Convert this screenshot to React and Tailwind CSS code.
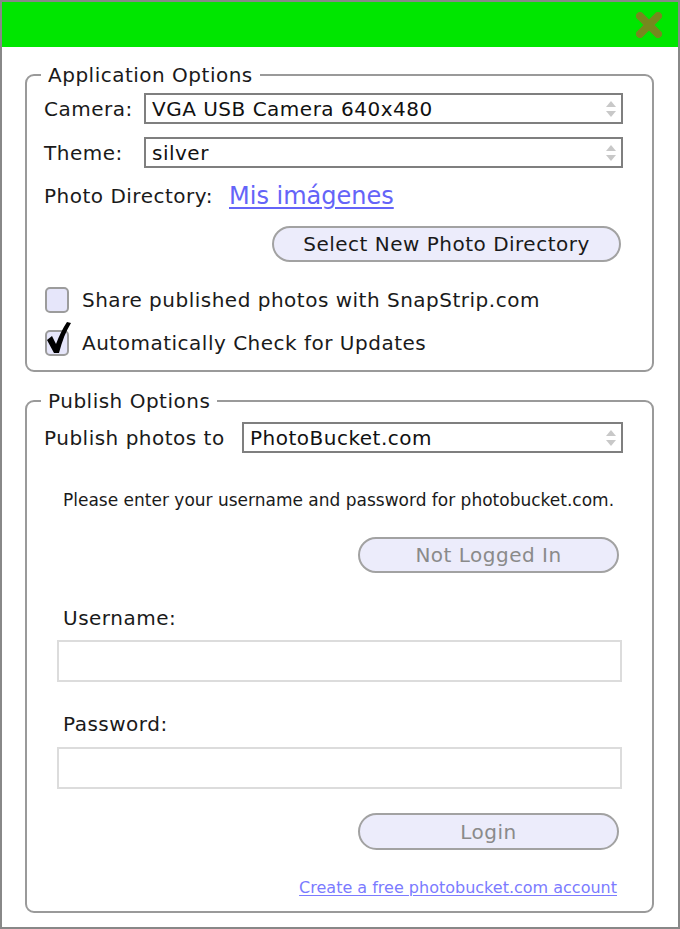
import React from 'react';

const font = "font-['DejaVu_Sans','Liberation_Sans',sans-serif]";

const Spinner = () => (
  <svg width="14" height="20" viewBox="0 0 14 20" className="shrink-0">
    <path d="M7 2 L12 8 L2 8 Z" fill="#c8c8c8" />
    <path d="M2 12 L12 12 L7 18 Z" fill="#c8c8c8" />
  </svg>
);

const SelectBox = ({ value }) => (
  <div className="flex-1 h-[31px] border-2 border-[#7f7f7f] flex items-center justify-between pl-[6px] pr-[3px] text-[20px] tracking-[0.5px] text-[#111]">
    <span>{value}</span>
    <Spinner />
  </div>
);

const PillButton = ({ children, width, height, muted }) => (
  <button
    className={`rounded-full border-2 border-[#a2a2a2] bg-[#ececfb] text-[20px] tracking-[0.5px] flex items-center justify-center ${
      muted ? 'text-[#8a8a8a]' : 'text-[#1a1a1a]'
    } ${width} ${height}`}
  >
    {children}
  </button>
);

const Checkbox = ({ checked }) => (
  <div className="relative w-[24px] h-[26px] shrink-0">
    <div className="w-[24px] h-[26px] rounded-[5px] border-2 border-[#9c9c9c] bg-[#e6e6fa]" />
    {checked && (
      <svg width="26" height="34" viewBox="0 0 26 34" className="absolute left-[1px] top-[-9px]">
        <path d="M1 19 L6 15 L10 23 C13 15 17 7 21 1 L25 2 C20 10 16 20 13 32 L8 32 Z" fill="#000" />
      </svg>
    )}
  </div>
);

const Legend = ({ children }) => (
  <legend className="ml-[14px] px-[7px] text-[20px] tracking-[0.5px] leading-[26px] text-[#1a1a1a]">{children}</legend>
);

export default function App() {
  return (
    <div className={`w-[680px] h-[929px] border-2 border-[#888] bg-white flex flex-col ${font}`}>
      <div className="h-[45px] bg-[#00e600] flex items-center justify-end pr-[14px] shrink-0">
        <svg width="30" height="30" viewBox="0 0 30 30">
          <g stroke="#7d8421" strokeWidth="8" strokeLinecap="round" opacity="0.95">
            <path d="M6 6 L24 24" />
            <path d="M24 6 L6 24" />
          </g>
        </svg>
      </div>

      <div className="ml-[23px] mr-[24px] flex flex-col">
        <fieldset className="mt-[15px] border-2 border-[#9a9a9a] rounded-[9px]">
          <Legend>Application Options</Legend>
          <div className="pl-[17px] pr-[29px] pt-[5px] pb-[13px] flex flex-col text-[20px] tracking-[0.5px] text-[#1a1a1a]">
            <div className="flex items-center h-[31px]">
              <span className="w-[100px] shrink-0">Camera:</span>
              <SelectBox value="VGA USB Camera 640x480" />
            </div>
            <div className="flex items-center h-[31px] mt-[13px]">
              <span className="w-[100px] shrink-0">Theme:</span>
              <SelectBox value="silver" />
            </div>
            <div className="flex items-center h-[30px] mt-[13px]">
              <span className="w-[185px] shrink-0">Photo Directory:</span>
              <a className="text-[24px] tracking-normal text-[#6464f8] underline underline-offset-[3px]" href="#">
                Mis imágenes
              </a>
            </div>
            <div className="flex justify-end mt-[15px] pr-[2px]">
              <PillButton width="w-[349px]" height="h-[36px]">Select New Photo Directory</PillButton>
            </div>
            <div className="flex items-center h-[28px] mt-[24px] pl-[1px] gap-[13px]">
              <Checkbox />
              <span>Share published photos with SnapStrip.com</span>
            </div>
            <div className="flex items-center h-[28px] mt-[15px] pl-[1px] gap-[13px]">
              <Checkbox checked />
              <span>Automatically Check for Updates</span>
            </div>
          </div>
        </fieldset>

        <fieldset className="mt-[16px] border-2 border-[#9a9a9a] rounded-[9px]">
          <Legend>Publish Options</Legend>
          <div className="pl-[17px] pr-[29px] pt-[8px] text-[20px] tracking-[0.5px] text-[#1a1a1a]">
            <div className="flex items-center h-[31px]">
              <span className="w-[198px] shrink-0">Publish photos to</span>
              <SelectBox value="PhotoBucket.com" />
            </div>
          </div>
          <div className="px-[30px] pb-[13px] flex flex-col text-[#1a1a1a]">
            <p className="mt-[35px] pl-[6px] h-[24px] leading-[24px] text-[17px]">
              Please enter your username and password for photobucket.com.
            </p>
            <div className="flex justify-end mt-[25px] pr-[3px]">
              <PillButton width="w-[261px]" height="h-[36px]" muted>Not Logged In</PillButton>
            </div>
            <label className="mt-[33px] pl-[6px] h-[24px] leading-[24px] text-[20px] tracking-[0.5px]">Username:</label>
            <div className="mt-[10px] h-[42px] border-2 border-[#dcdcdc] bg-white" />
            <label className="mt-[30px] pl-[6px] h-[24px] leading-[24px] text-[20px] tracking-[0.5px]">Password:</label>
            <div className="mt-[11px] h-[42px] border-2 border-[#dcdcdc] bg-white" />
            <div className="flex justify-end mt-[24px] pr-[3px]">
              <PillButton width="w-[261px]" height="h-[37px]" muted>Login</PillButton>
            </div>
            <div className="flex justify-end mt-[28px] pr-[5px] h-[20px] leading-[20px]">
              <a className="text-[16px] text-[#7b7bff] underline underline-offset-[2px]" href="#">
                Create a free photobucket.com account
              </a>
            </div>
          </div>
        </fieldset>
      </div>
    </div>
  );
}
